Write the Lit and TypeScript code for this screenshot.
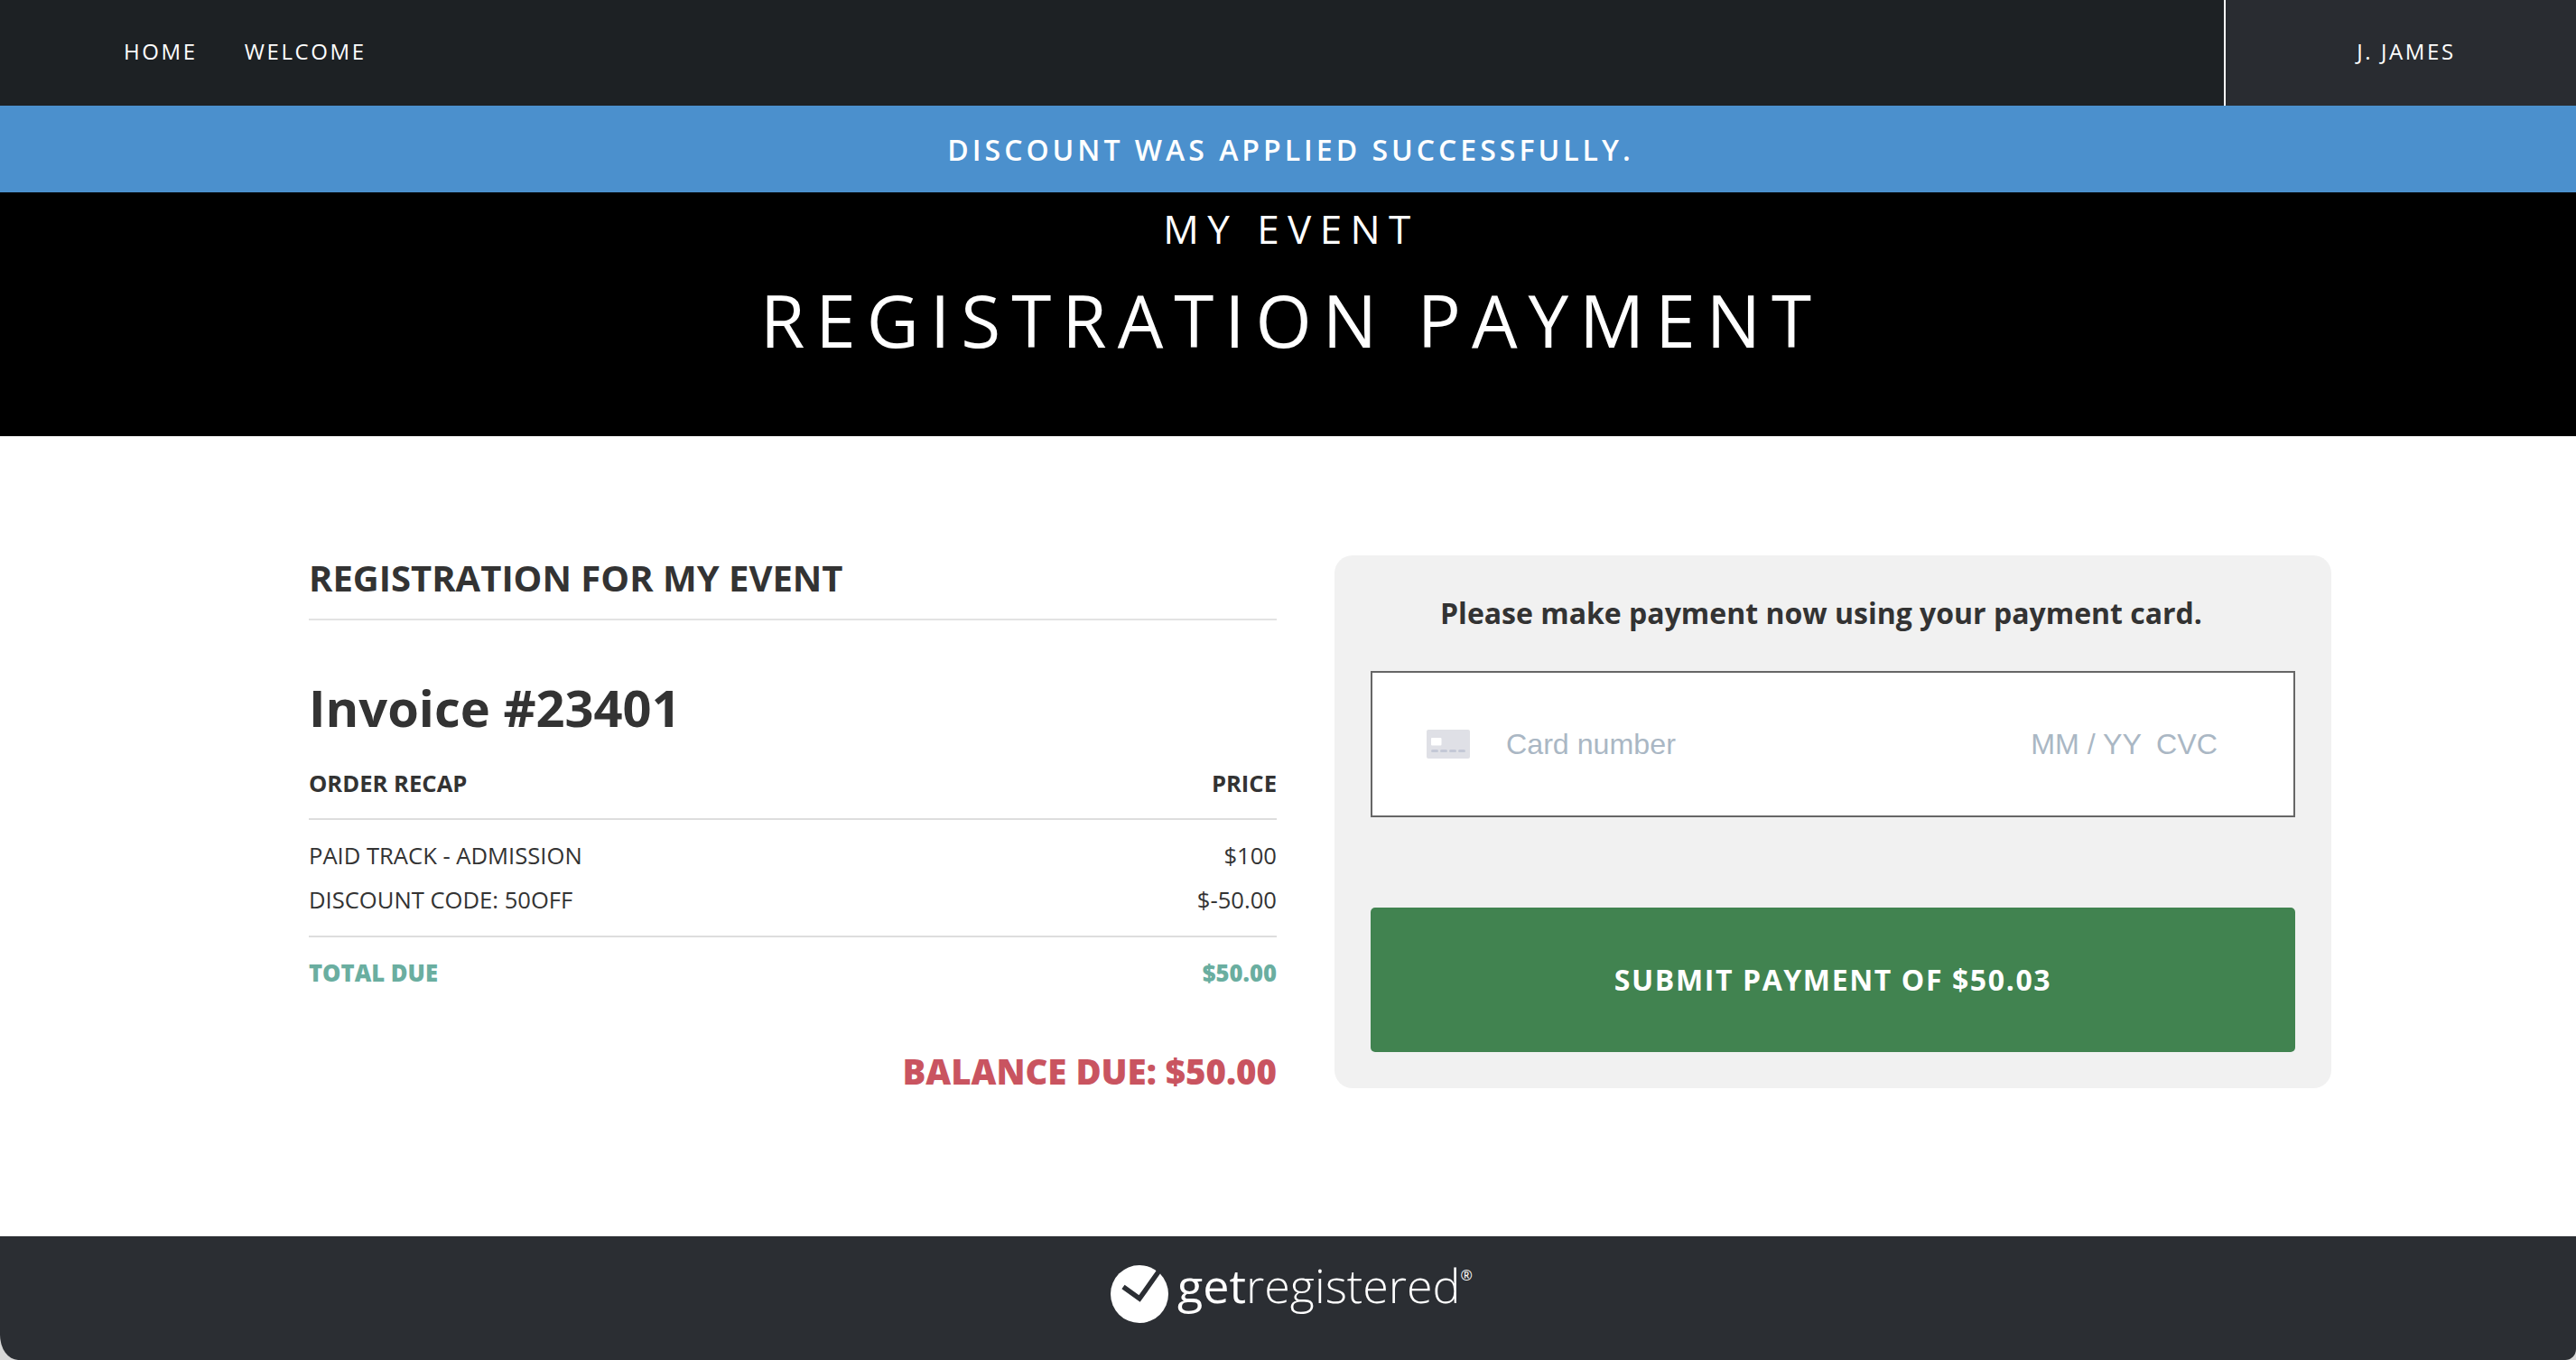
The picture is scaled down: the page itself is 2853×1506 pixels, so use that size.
import { LitElement, html, css } from "lit";
import { customElement } from "lit/decorators.js";

@customElement("app-root")
export class AppRoot extends LitElement {
  static styles = css`
    :host { display: flex; flex-direction: column; width: 2853px; height: 1506px; overflow: hidden; background: #fff; font-family: "Open Sans", sans-serif; color: #333; }
    * { box-sizing: border-box; }
    .nav { height: 117px; flex: none; display: flex; background: #1d2124; color: #fff; font-size: 24px; font-weight: 500; letter-spacing: 2.6px; align-items: stretch; }
    .links { flex: 1; display: flex; gap: 52px; align-items: center; padding: 0 0 4px 137px; }
    .user { width: 390px; flex: none; border-left: 2px solid #fff; background: #292c31; display: flex; align-items: center; justify-content: center; padding: 0 0 4px 12px; }
    .alert { height: 96px; flex: none; background: #4b90cd; color: #fff; font-size: 32px; font-weight: 600; letter-spacing: 4px; display: flex; align-items: center; justify-content: center; padding-left: 6px; }
    .hero { height: 270px; flex: none; background: #000; color: #fff; display: flex; flex-direction: column; align-items: center; }
    .hero .event { font-size: 44px; letter-spacing: 9.4px; line-height: 57px; margin-top: 12px; padding-left: 7px; }
    .hero h1 { margin: 17px 0 0; font-weight: 400; font-size: 80px; letter-spacing: 12px; line-height: 109px; padding-left: 7px; }
    .main { flex: 1; display: flex; padding: 130px 271px 0 342px; gap: 64px; align-items: flex-start; }
    .left { width: 1072px; flex: none; }
    .left h2 { margin: 0; font-size: 40px; font-weight: 700; line-height: 54px; padding-bottom: 18px; border-bottom: 2px solid #e3e3e3; }
    .left h3 { margin: 58px 0 0; font-size: 56px; line-height: 76px; font-weight: 700; }
    .row { display: flex; justify-content: space-between; }
    .head { font-size: 25.6px; font-weight: 700; line-height: 35px; margin-top: 29px; padding-bottom: 21px; border-bottom: 2px solid #ddd; }
    .items { padding: 15px 0 15px; border-bottom: 2px solid #ddd; font-size: 25.6px; line-height: 49px; font-weight: 400; }
    .total { font-size: 25.6px; font-weight: 800; color: #6aaea0; line-height: 35px; margin-top: 22px; }
    .balance { margin-top: 64px; text-align: right; font-size: 38.4px; font-weight: 800; color: #c95460; line-height: 54px; }
    .card { flex: 1; height: 590px; margin-top: 2px; background: #f1f1f1; border-radius: 20px; padding: 42px 40px 0; display: flex; flex-direction: column; }
    .card p { margin: 0 26px 0 0; text-align: center; font-size: 32px; font-weight: 700; line-height: 44px; }
    .input { margin-top: 42px; height: 162px; flex: none; background: #fff; border: 2px solid #666; display: flex; align-items: center; padding: 0 84px 0 60px; font-family: "Liberation Sans", sans-serif; font-size: 32.2px; color: #aab7c4; }
    .input svg { display: block; margin-right: 40px; }
    .input .num { flex: 1; }
    .input .exp { margin-right: 16px; }
    .pay { margin-top: 100px; height: 160px; flex: none; background: #418350; color: #fff; border-radius: 5px; display: flex; align-items: center; justify-content: center; font-size: 32px; font-weight: 700; letter-spacing: 1.6px; padding-bottom: 1px; }
    .frame { flex: none; background: #d8d8d8; }
    .foot { height: 137px; background: #2b2e33; display: flex; justify-content: center; padding-top: 32px; border-radius: 0 0 12px 0; border-bottom-left-radius: 20px 28px; color: #fff; }
    .logo { display: flex; align-items: flex-start; margin-left: 8px; }
    .logo svg { display: block; margin-right: 10px; }
    .word { font-size: 52px; line-height: 56px; font-weight: 300; margin-top: -6px; }
    .word b { font-weight: 400; }
    .reg { font-size: 16px; line-height: 16px; margin-top: 3px; margin-left: 0; }
  `;
  render() {
    return html`
      <div class="nav">
        <div class="links"><span>HOME</span><span>WELCOME</span></div>
        <div class="user">J. JAMES</div>
      </div>
      <div class="alert">DISCOUNT WAS APPLIED SUCCESSFULLY.</div>
      <div class="hero">
        <div class="event">MY EVENT</div>
        <h1>REGISTRATION PAYMENT</h1>
      </div>
      <div class="main">
        <div class="left">
          <h2>REGISTRATION FOR MY EVENT</h2>
          <h3>Invoice #23401</h3>
          <div class="row head"><span>ORDER RECAP</span><span>PRICE</span></div>
          <div class="items">
            <div class="row"><span>PAID TRACK - ADMISSION</span><span>$100</span></div>
            <div class="row"><span>DISCOUNT CODE: 50OFF</span><span>$-50.00</span></div>
          </div>
          <div class="row total"><span>TOTAL DUE</span><span>$50.00</span></div>
          <div class="balance">BALANCE DUE: $50.00</div>
        </div>
        <div class="card">
          <p>Please make payment now using your payment card.</p>
          <div class="input">
            <svg width="48" height="32" viewBox="0 0 48 32">
              <rect width="48" height="32" rx="2" fill="#dfe0e6"/>
              <rect x="5" y="9" width="11.5" height="8.5" rx="1" fill="#fff"/>
              <g fill="#c4c8d6"><rect x="5" y="22" width="8" height="3" rx="1.5"/><rect x="15" y="22" width="8" height="3" rx="1.5"/><rect x="25" y="22" width="8" height="3" rx="1.5"/><rect x="35" y="22" width="8" height="3" rx="1.5"/></g>
            </svg>
            <span class="num">Card number</span><span class="exp">MM / YY</span><span>CVC</span>
          </div>
          <div class="pay">SUBMIT PAYMENT OF $50.03</div>
        </div>
      </div>
      <div class="frame"><div class="foot">
        <div class="logo">
          <svg width="64" height="64" viewBox="0 0 64 64"><circle cx="32" cy="32" r="32" fill="#fff"/><path d="M14 24 L32 37 L54 6" fill="none" stroke="#2b2e33" stroke-width="5.5"/></svg>
          <span class="word"><b>get</b>registered</span><span class="reg">®</span>
        </div>
      </div></div>
    `;
  }
}
